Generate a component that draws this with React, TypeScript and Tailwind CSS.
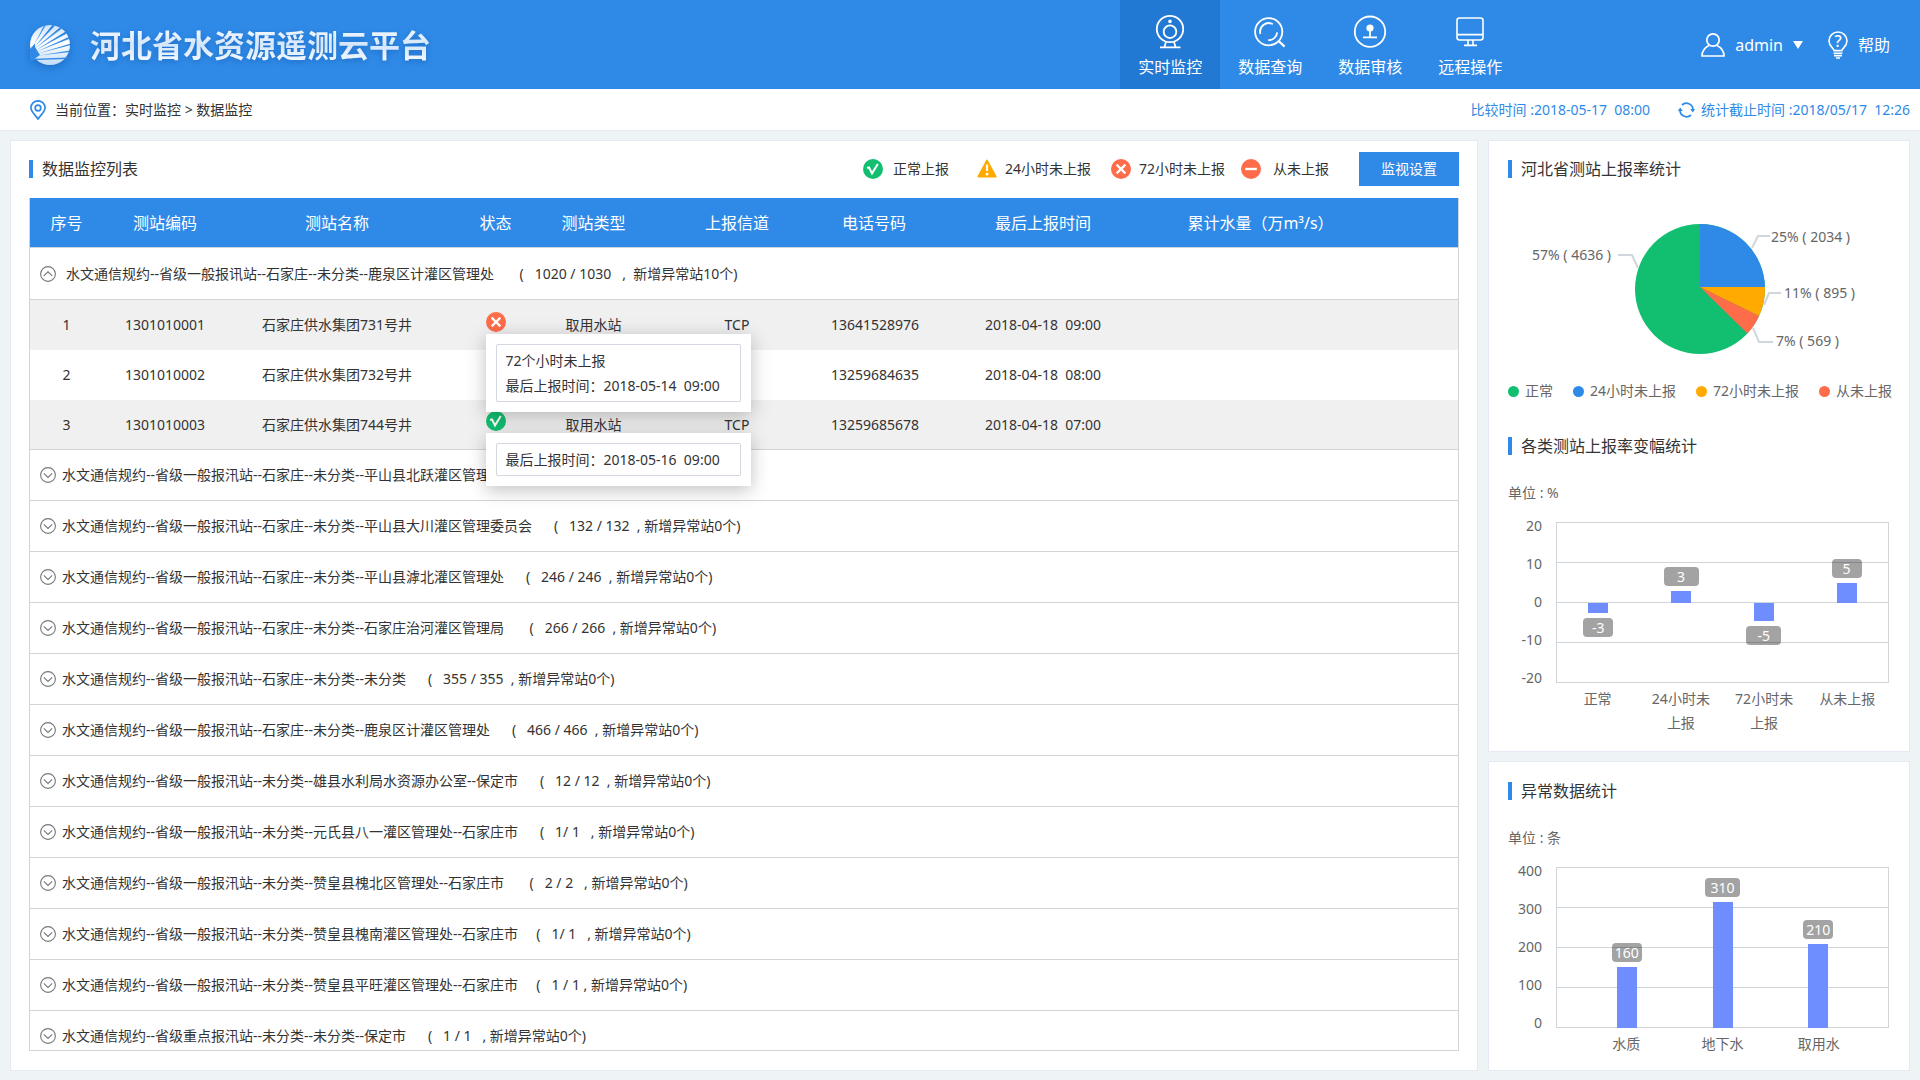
import React from 'react';

type Status = 'ok' | 'late24' | 'late72' | 'never';

interface Station {
  no: number;
  code: string;
  name: string;
  status?: Status;
  type?: string;
  channel?: string;
  phone: string;
  time: string;
  tip?: string[];
}

interface Bar {
  label: string;
  value: number;
  size: number;
  badge: string;
}

const navItems = [
  { label: '实时监控', icon: <CameraIcon />, active: true },
  { label: '数据查询', icon: <SearchIcon />, active: false },
  { label: '数据审核', icon: <AuditIcon />, active: false },
  { label: '远程操作', icon: <MonitorIcon />, active: false },
];

const legend: { label: string; status: Status; spacing: string }[] = [
  { label: '正常上报', status: 'ok', spacing: 'gap-2.5 mr-7' },
  { label: '24小时未上报', status: 'late24', spacing: 'gap-2 mr-5' },
  { label: '72小时未上报', status: 'late72', spacing: 'gap-2 mr-4' },
  { label: '从未上报', status: 'never', spacing: 'gap-3 mr-[30px]' },
];

const stations: Station[] = [
  {
    no: 1,
    code: '1301010001',
    name: '石家庄供水集团731号井',
    status: 'late72',
    type: '取用水站',
    channel: 'TCP',
    phone: '13641528976',
    time: '2018-04-18  09:00',
    tip: ['72个小时未上报', '最后上报时间：2018-05-14  09:00'],
  },
  {
    no: 2,
    code: '1301010002',
    name: '石家庄供水集团732号井',
    phone: '13259684635',
    time: '2018-04-18  08:00',
  },
  {
    no: 3,
    code: '1301010003',
    name: '石家庄供水集团744号井',
    status: 'ok',
    type: '取用水站',
    channel: 'TCP',
    phone: '13259685678',
    time: '2018-04-18  07:00',
    tip: ['最后上报时间：2018-05-16  09:00'],
  },
];

const groups = [
  '水文通信规约--省级一般报汛站--石家庄--未分类--平山县北跃灌区管理处',
  '水文通信规约--省级一般报汛站--石家庄--未分类--平山县大川灌区管理委员会      (   132 / 132  , 新增异常站0个)',
  '水文通信规约--省级一般报汛站--石家庄--未分类--平山县滹北灌区管理处      (   246 / 246  , 新增异常站0个)',
  '水文通信规约--省级一般报汛站--石家庄--未分类--石家庄治河灌区管理局       (   266 / 266  , 新增异常站0个)',
  '水文通信规约--省级一般报汛站--石家庄--未分类--未分类      (   355 / 355  , 新增异常站0个)',
  '水文通信规约--省级一般报汛站--石家庄--未分类--鹿泉区计灌区管理处      (   466 / 466  , 新增异常站0个)',
  '水文通信规约--省级一般报汛站--未分类--雄县水利局水资源办公室--保定市      (   12 / 12  , 新增异常站0个)',
  '水文通信规约--省级一般报汛站--未分类--元氏县八一灌区管理处--石家庄市      (   1/ 1   , 新增异常站0个)',
  '水文通信规约--省级一般报汛站--未分类--赞皇县槐北区管理处--石家庄市       (   2 / 2   , 新增异常站0个)',
  '水文通信规约--省级一般报汛站--未分类--赞皇县槐南灌区管理处--石家庄市     (   1/ 1   , 新增异常站0个)',
  '水文通信规约--省级一般报汛站--未分类--赞皇县平旺灌区管理处--石家庄市     (   1 / 1 , 新增异常站0个)',
  '水文通信规约--省级重点报汛站--未分类--未分类--保定市      (   1 / 1   , 新增异常站0个)',
];

const changeBars: Bar[] = [
  { label: '正常', value: -3, size: 10, badge: 'w-[30px]' },
  { label: '24小时未\n上报', value: 3, size: 12, badge: 'w-[35px]' },
  { label: '72小时未\n上报', value: -5, size: 18, badge: 'w-[35px]' },
  { label: '从未上报', value: 5, size: 20, badge: 'w-[30px]' },
];

const abnormalBars: Bar[] = [
  { label: '水质', value: 160, size: 61, badge: 'w-[30px]' },
  { label: '地下水', value: 310, size: 126, badge: 'w-[35px]' },
  { label: '取用水', value: 210, size: 84, badge: 'w-[30px]' },
];

const pieLegend = [
  { label: '正常', color: 'bg-[#12bf71]' },
  { label: '24小时未上报', color: 'bg-[#2f8ae7]' },
  { label: '72小时未上报', color: 'bg-[#ffaa00]' },
  { label: '从未上报', color: 'bg-[#ff6c4a]' },
];

function Logo() {
  return (
    <svg className="w-10 h-10 drop-shadow-[0_3px_4px_rgba(0,60,140,0.35)]" viewBox="0 0 40 40">
      <defs>
        <linearGradient id="globe" x1="0" y1="0" x2="0" y2="1">
          <stop offset="0" stopColor="#cfe3f9" />
          <stop offset="0.45" stopColor="#ffffff" />
          <stop offset="1" stopColor="#c3dcf7" />
        </linearGradient>
      </defs>
      <circle cx="20" cy="20" r="20" fill="url(#globe)" />
      <g fill="#2f8ae7">
        <path d="M-1 25 L5 18.5 L5 22 L10 30 L5 33.5 L6 35 L-1 36 Z" />
        <path d="M4 20 L13.5 1.5 L15.5 0.8 Z" />
        <path d="M4.5 22 L22.5 -0.2 L25 0.8 Z" />
        <path d="M5 23.5 L30 2.2 L32 3.6 Z" />
        <path d="M6 25 L35.5 6.6 L36.8 8.4 Z" />
        <path d="M7 26.5 L38.6 12 L39.6 13.8 Z" />
        <path d="M8 28.5 L40.4 18.6 L40.4 20.2 Z" />
        <path d="M9 30.5 L40.4 25.4 L40 27 Z" />
        <path d="M5 33.8 L39 32.4 L38 34 L6 35 Z" />
      </g>
    </svg>
  );
}

function CameraIcon() {
  return (
    <svg className="w-10 h-10" viewBox="0 0 40 40" fill="none" stroke="white" strokeWidth="1.8">
      <circle cx="20" cy="20" r="13.2" />
      <circle cx="20" cy="22.7" r="6.3" />
      <circle cx="20" cy="12.4" r="1.8" fill="white" stroke="none" />
      <path d="M16 33 L14.4 38 M24 33 L25.6 38 M10 38.4 H30.5" />
    </svg>
  );
}

function SearchIcon() {
  return (
    <svg className="w-10 h-10" viewBox="0 0 40 40" fill="none" stroke="white" strokeWidth="1.8">
      <circle cx="18.7" cy="22.7" r="13.6" />
      <path d="M28.6 32 L34.6 37.6" strokeWidth="2.2" />
      <path d="M10.4 25 A8.6 8.6 0 0 1 22.8 15.2" />
      <path d="M27.2 23.4 A8.6 8.6 0 0 1 18.2 31.2" />
    </svg>
  );
}

function AuditIcon() {
  return (
    <svg className="w-10 h-10" viewBox="0 0 40 40" fill="none" stroke="white" strokeWidth="1.8">
      <circle cx="20" cy="22.7" r="15.2" />
      <circle cx="20" cy="19" r="3.6" fill="white" stroke="none" />
      <path d="M20 20 V28.4 M13 28.4 H27" />
    </svg>
  );
}

function MonitorIcon() {
  return (
    <svg className="w-10 h-10" viewBox="0 0 40 40" fill="none" stroke="white" strokeWidth="1.6">
      <rect x="7" y="9" width="26" height="22" rx="2.5" />
      <path d="M7 25.6 H33 M18 31 V36 M23 31 V36 M14 36.4 H27" />
    </svg>
  );
}

function StatusIcon({ status }: { status: Status }) {
  if (status === 'late24') {
    return (
      <svg className="w-5 h-5" viewBox="0 0 20 20">
        <path d="M10 1.6 L18.6 17.6 H1.4 Z" fill="#ffaa00" stroke="#ffaa00" strokeWidth="2" strokeLinejoin="round" />
        <path d="M10 5.5 V12" stroke="white" strokeWidth="2.2" />
        <circle cx="10" cy="15.2" r="1.4" fill="white" />
      </svg>
    );
  }
  return (
    <svg className="w-5 h-5" viewBox="0 0 20 20" fill="none" stroke="white" strokeWidth="2.2">
      <circle cx="10" cy="10" r="10" fill={status === 'ok' ? '#12bf71' : '#ff6c4a'} stroke="none" />
      {status === 'ok' && <path d="M4 9 L6 8.4 L9 14.4 L14.8 5" strokeWidth="2" />}
      {status === 'late72' && <path d="M5.6 5.6 L14.4 14.4 M14.4 5.6 L5.6 14.4" />}
      {status === 'never' && <path d="M4.2 10 H15.8" strokeWidth="2.4" />}
    </svg>
  );
}

function Toggle({ open }: { open?: boolean }) {
  return (
    <svg className="w-4 h-4 shrink-0" viewBox="0 0 16 16" fill="none" stroke="#777" strokeWidth="1.1">
      <circle cx="8" cy="8" r="7.4" />
      <path d={open ? 'M3.8 9.8 L8 5.8 L12.2 9.8' : 'M3.8 6.4 L8 10.4 L12.2 6.4'} />
    </svg>
  );
}

function PanelTitle({ children }: { children: React.ReactNode }) {
  return (
    <h2 className="flex items-center gap-[9px] h-[18px] text-base text-[#333]">
      <span className="w-1 h-[18px] bg-[#2f8ae7]"></span>
      {children}
    </h2>
  );
}

function BarChart({ ticks, bars, signed }: { ticks: string[]; bars: Bar[]; signed?: boolean }) {
  return (
    <div className="flex items-start gap-3.5 text-sm text-[#666]">
      <div className="w-[34px] h-[172px] -mt-1.5 flex flex-col justify-between text-right leading-5">
        {ticks.map((tick) => (
          <span key={tick}>{tick}</span>
        ))}
      </div>
      <div className="flex-1">
        <div className="relative border-t border-x border-[#d0d5da]">
          {[0, 1, 2, 3].map((line) => (
            <div key={line} className="h-10 border-b border-[#d0d5da]"></div>
          ))}
          <div className={`absolute inset-0 flex ${signed ? '' : 'px-[22px]'}`}>
            {bars.map((bar) => (
              <div key={bar.label} className={`flex-1 flex flex-col ${signed && bar.value < 0 ? 'pt-20' : ''} ${signed && bar.value > 0 ? 'pb-20' : ''}`}>
                <div className={`flex-1 flex items-center gap-[5px] ${bar.value < 0 ? 'flex-col-reverse justify-end' : 'flex-col justify-end'}`}>
                  <span className={`h-[19px] rounded bg-black/36 text-white text-center leading-[19px] ${bar.badge}`}>
                    {bar.value}
                  </span>
                  <span className="w-5 bg-[#6e8dff]" style={{ height: bar.size }}></span>
                </div>
              </div>
            ))}
          </div>
        </div>
        <div className={`flex mt-1 leading-6 text-center whitespace-pre-line ${signed ? '' : 'px-[22px]'}`}>
          {bars.map((bar) => (
            <span key={bar.label} className="flex-1">{bar.label}</span>
          ))}
        </div>
      </div>
    </div>
  );
}

function Pie() {
  return (
    <svg className="w-full h-[170px]" viewBox="0 0 420 170">
      <circle cx="211" cy="89" r="65" fill="#12bf71" />
      <path d="M211 87 V24 A65 65 0 0 1 276 87 Z" fill="#2f8ae7" />
      <path d="M211 87 H276 A65 65 0 0 1 270 116 Z" fill="#ffaa00" />
      <path d="M211 87 L270 116 A65 65 0 0 1 258.5 133.5 Z" fill="#ff6c4a" />
      <g fill="none" stroke="#d0d6dc" strokeWidth="2">
        <path d="M129 55 H143 L149 68" />
        <path d="M281 36 H269 L263 48" />
        <path d="M292 93 H280 L275 105" />
        <path d="M284 142 H270 L264 128" />
      </g>
      <g fill="#666" fontSize="14">
        <text x="43" y="60">57% ( 4636 )</text>
        <text x="282" y="42">25% ( 2034 )</text>
        <text x="295" y="98">11% ( 895 )</text>
        <text x="287" y="146">7% ( 569 )</text>
      </g>
    </svg>
  );
}

function Header() {
  return (
    <header className="h-[89px] shrink-0 flex items-center bg-[#2f8ae7] pl-[30px] pr-[30px] text-white">
      <Logo />
      <h1 className="ml-5 text-[31px] leading-[44px] font-bold text-transparent bg-clip-text bg-linear-to-b from-white via-[#d3e6fb] to-white drop-shadow-[0_2px_3px_rgba(0,60,140,0.35)]">
        河北省水资源遥测云平台
      </h1>
      <nav className="ml-auto flex h-full">
        {navItems.map((item) => (
          <a
            key={item.label}
            href="#"
            className={`w-[100px] h-full pt-[9px] flex flex-col items-center gap-1.5 text-base leading-6 ${item.active ? 'bg-[#2279d4]' : ''}`}
          >
            {item.icon}
            {item.label}
          </a>
        ))}
      </nav>
      <button className="ml-[181px] flex items-center gap-2.5 text-base">
        <svg className="w-6 h-6" viewBox="0 0 24 24" fill="none" stroke="white" strokeWidth="1.7">
          <ellipse cx="12" cy="7" rx="6.2" ry="6.2" />
          <path d="M8 12.4 C3.6 14.6 1 18 1 23 H23 C23 18 20.4 14.6 16 12.4" />
        </svg>
        admin
        <svg className="w-2.5 h-2" viewBox="0 0 10 8">
          <path d="M0 0 H10 L5 8 Z" fill="white" />
        </svg>
      </button>
      <a href="#" className="ml-[25px] flex items-center gap-2.5 text-base">
        <svg className="w-5 h-7" viewBox="0 0 20 28" fill="none" stroke="white" strokeWidth="1.6">
          <path d="M6.2 19.6 C6 17.4 1 15.6 1 10 A9 9 0 0 1 19 10 C19 15.6 14 17.4 13.8 19.6 Z" />
          <path d="M5.6 22.2 H14.4 M6 24.6 H14 M8 27 H12" />
          <text x="10" y="16" textAnchor="middle" fontSize="16" fontWeight="500" fill="white" stroke="none">?</text>
        </svg>
        帮助
      </a>
    </header>
  );
}

function Breadcrumb() {
  return (
    <div className="h-[42px] shrink-0 flex items-center bg-white border-b border-[#e6e9f2] pl-[30px] pr-2.5 text-sm text-[#333] whitespace-pre">
      <svg className="w-4 h-5 mr-[9px]" viewBox="0 0 16 20" fill="none" stroke="#2f8ae7" strokeWidth="1.7">
        <path d="M8 19 C5 14.6 0.9 11.6 0.9 7.8 A7.1 7 0 0 1 15.1 7.8 C15.1 11.6 11 14.6 8 19 Z" />
        <circle cx="8" cy="8" r="2.8" />
      </svg>
      当前位置：实时监控 &gt; 数据监控
      <span className="ml-auto text-[#2f8ae7]">比较时间 :2018-05-17  08:00</span>
      <svg className="w-[17px] h-4 ml-7 mr-1.5" viewBox="0 0 17 16" fill="none" stroke="#2f8ae7" strokeWidth="1.7">
        <path d="M4 3 A6.6 6.6 0 0 1 15 7.4" />
        <path d="M13 13 A6.6 6.6 0 0 1 2 8.6" />
        <path d="M12.2 7 H17.2 L14.8 10.4 Z M-0.2 9 H4.8 L2.2 5.6 Z" fill="#2f8ae7" stroke="none" />
      </svg>
      <span className="text-[#2f8ae7]">统计截止时间 :2018/05/17  12:26</span>
    </div>
  );
}

function StationTable() {
  return (
    <div className="flex-1 min-h-0 overflow-hidden border-x border-b border-[#d0d5da]">
      <table className="w-full table-fixed border-separate border-spacing-0 text-sm text-[#333] text-center whitespace-pre">
        <thead>
          <tr className="bg-[#2f8ae7] text-white text-base *:h-[50px] *:font-normal *:border-b *:border-[#d0d5da]">
            <th className="w-[73px]">序号</th>
            <th className="w-[124px]">测站编码</th>
            <th className="w-[220px]">测站名称</th>
            <th className="w-[97px]">状态</th>
            <th className="w-[99px]">测站类型</th>
            <th className="w-[188px]">上报信道</th>
            <th className="w-[86px]">电话号码</th>
            <th className="w-[252px]">最后上报时间</th>
            <th className="pr-[106px]">累计水量（万m³/s）</th>
          </tr>
        </thead>
        <tbody>
          <tr>
            <td colSpan={9} className="h-[52px] border-b border-[#d0d5da]">
              <button className="flex items-center gap-2.5 pl-2.5">
                <Toggle open />
                水文通信规约--省级一般报讯站--石家庄--未分类--鹿泉区计灌区管理处       (   1020 / 1030   ,  新增异常站10个)
              </button>
            </td>
          </tr>
          {stations.map((s) => (
            <tr key={s.no} className="odd:bg-white even:bg-[#f0f0f0] nth-[4]:*:border-b *:border-[#d0d5da]">
              <td className="h-[50px]">{s.no}</td>
              <td>{s.code}</td>
              <td>{s.name}</td>
              <td className="pb-2">
                {s.status && (
                  <span className="relative inline-block align-middle">
                    <StatusIcon status={s.status} />
                    {s.tip && (
                      <span className="absolute left-0 top-full mt-0.5 z-10 block bg-white p-2.5 shadow-[0_4px_18px_rgba(0,0,0,0.25)]">
                        <span className="flex flex-col border border-[#d3d7df] rounded-xs py-[3px] pl-[9px] pr-5 text-left leading-[25px]">
                          {s.tip.map((line) => (
                            <span key={line}>{line}</span>
                          ))}
                        </span>
                      </span>
                    )}
                  </span>
                )}
              </td>
              <td>{s.type}</td>
              <td>{s.channel}</td>
              <td>{s.phone}</td>
              <td>{s.time}</td>
              <td></td>
            </tr>
          ))}
          {groups.map((group) => (
            <tr key={group}>
              <td colSpan={9} className="h-[51px] border-b border-[#d0d5da]">
                <button className="flex items-center gap-1.5 pl-2.5">
                  <Toggle />
                  {group}
                </button>
              </td>
            </tr>
          ))}
        </tbody>
      </table>
    </div>
  );
}

export default function App() {
  return (
    <div className="h-screen flex flex-col overflow-hidden bg-[#eef3f6] font-['Noto_Sans','Noto_Sans_CJK_SC',sans-serif]">
      <Header />
      <Breadcrumb />

      <main className="flex-1 min-h-0 flex gap-2.5 px-2.5 py-[9px]">
        <section className="flex-1 min-w-0 flex flex-col bg-white border border-[#e6e9f2] pt-[11px] pb-[19px] pl-[18px] pr-[18px]">
          <div className="flex items-center mb-3 text-sm text-[#333]">
            <PanelTitle>数据监控列表</PanelTitle>
            <div className="ml-auto flex">
              {legend.map((item) => (
                <span key={item.label} className={`flex items-center ${item.spacing}`}>
                  <StatusIcon status={item.status} />
                  {item.label}
                </span>
              ))}
            </div>
            <button className="w-[100px] h-[34px] bg-[#2f8ae7] text-white">监视设置</button>
          </div>
          <StationTable />
        </section>

        <aside className="w-[422px] shrink-0 flex flex-col gap-[9px]">
          <section className="bg-white border border-[#e6e9f2] pt-[19px] pb-4">
            <div className="pl-[19px]">
              <PanelTitle>河北省测站上报率统计</PanelTitle>
            </div>
            <div className="mt-[22px]">
              <Pie />
            </div>
            <div className="mt-[11px] pl-[19px] flex gap-5 text-sm leading-5 text-[#666] whitespace-nowrap">
              {pieLegend.map((item) => (
                <span key={item.label} className="flex items-center gap-1.5">
                  <span className={`w-[11px] h-[11px] rounded-full ${item.color}`}></span>
                  {item.label}
                </span>
              ))}
            </div>
            <div className="mt-9 pl-[19px] pr-5">
              <PanelTitle>各类测站上报率变幅统计</PanelTitle>
              <p className="mt-7 mb-[19px] text-sm leading-5 text-[#666]">单位 : %</p>
              <BarChart ticks={['20', '10', '0', '-10', '-20']} bars={changeBars} signed />
            </div>
          </section>

          <section className="flex-1 bg-white border border-[#e6e9f2] pt-5 pl-[19px] pr-5">
            <PanelTitle>异常数据统计</PanelTitle>
            <p className="mt-7 mb-[19px] text-sm leading-5 text-[#666]">单位 : 条</p>
            <BarChart ticks={['400', '300', '200', '100', '0']} bars={abnormalBars} />
          </section>
        </aside>
      </main>
    </div>
  );
}
